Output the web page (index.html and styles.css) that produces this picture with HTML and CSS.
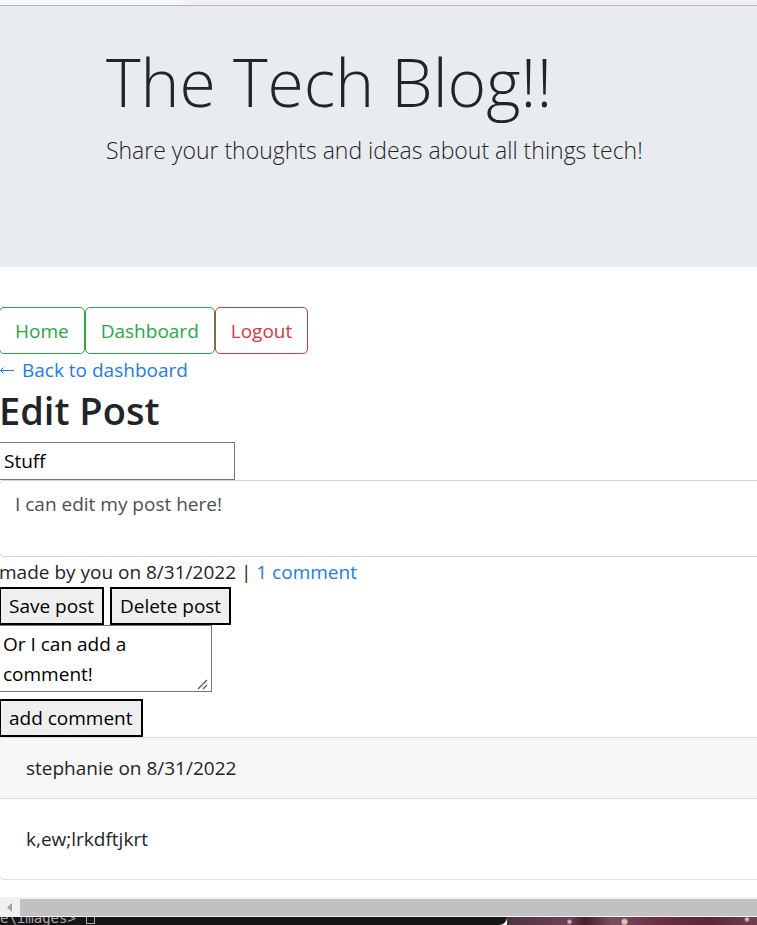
FILE: index.html
```html
<!DOCTYPE html>
<html lang="en">
<head>
<meta charset="utf-8">
<title>The Tech Blog!!</title>
<link rel="stylesheet" href="styles.css">
</head>
<body>
<div class="window">
  <div class="chrome-edge"></div>
  <div class="page">
    <header class="jumbotron">
      <h1 class="display">The Tech Blog!!</h1>
      <p class="lead">Share your thoughts and ideas about all things tech!</p>
    </header>
    <main class="content">
      <nav class="nav">
        <a class="btn btn-success" href="#home">Home</a>
        <a class="btn btn-success" href="#dashboard">Dashboard</a>
        <a class="btn btn-danger" href="#logout">Logout</a>
      </nav>
      <a class="link back" href="#dashboard"><svg class="arrow" viewBox="0 0 16 12" aria-hidden="true"><path d="M15 6.500H1.500M4.500 3.500L1.500 6.500L4.500 9.500"/></svg>Back to dashboard</a>
      <h2 class="title">Edit Post</h2>
      <form class="form">
        <input class="post-title" type="text" value="Stuff" aria-label="Post title">
        <textarea class="post-body" aria-label="Post text">I can edit my post here!</textarea>
        <div class="meta">made by you on 8/31/2022 | <a class="link" href="#comments">1 comment</a></div>
        <div class="actions">
          <button class="plain" type="button">Save post</button>
          <button class="plain" type="button">Delete post</button>
        </div>
      </form>
      <form class="form">
        <div class="comment-box">
          <textarea class="comment-body" aria-label="Comment">Or I can add a comment!</textarea>
          <svg class="grip" viewBox="0 0 12 12" aria-hidden="true"><path d="M1 11L10 2M6 11L10 7"/></svg>
        </div>
        <button class="plain" type="button">add comment</button>
      </form>
      <article class="card" id="comments">
        <div class="card-header">stephanie on 8/31/2022</div>
        <div class="card-body">k,ew;lrkdftjkrt</div>
      </article>
    </main>
  </div>
  <div class="scrollbar">
    <button class="scroll-arrow" type="button" aria-label="Scroll left"><svg viewBox="0 0 20 17"><path d="M12 4v9L7 8.500z"/></svg></button>
    <div class="thumb"></div>
  </div>
  <div class="desktop">
    <div class="terminal"><span class="prompt">e\images&gt; <span class="cursor"></span></span></div>
    <div class="wallpaper"></div>
  </div>
</div>
</body>
</html>
```
FILE: styles.css
```css
* { box-sizing: border-box; }
html, body { height: 100%; }
body {
  margin: 0;
  background: #fff;
  color: #212529;
  font-family: "Segoe UI", "Open Sans", "Noto Sans", sans-serif;
  font-size: 19px;
  line-height: 30px;
}
.window {
  display: flex;
  flex-direction: column;
  min-height: 100%;
  overflow: hidden;
}
.chrome-edge {
  height: 6px;
  background: linear-gradient(90deg, #f8f8f8 180px, #f1efef 190px);
  border-bottom: 1px solid #b4b8ba;
}
.page { flex: 1; }
.jumbotron {
  padding: 33px 14% 100px;
  background: #e9ecef;
  white-space: nowrap;
}
.display {
  margin: 0 0 10px;
  font-size: 66px;
  font-weight: 300;
  line-height: 84px;
}
.lead {
  margin: 0;
  font-size: 23px;
  font-weight: 300;
  line-height: 34px;
}
.content { margin: 40px -8px 17px -1px; }
.nav { display: flex; }
.btn {
  padding: 8px 15px 7px;
  border: 1px solid;
  border-radius: 5px;
  text-decoration: none;
}
.btn-success { color: #28a745; }
.btn-danger { color: #dc3545; }
.link { color: #1a7cf0; text-decoration: none; }
.back { display: flex; align-items: center; gap: 7px; margin-top: 1px; }
.arrow {
  width: 16px;
  height: 12px;
  fill: none;
  stroke: currentColor;
  stroke-width: 1;
}
.title {
  margin: 0 0 7px;
  font-size: 38px;
  font-weight: 600;
  line-height: 50px;
}
.form { display: flex; flex-direction: column; align-items: flex-start; }
input, textarea, button { font: inherit; margin: 0; }
input, textarea { display: block; border: 1px solid #767676; border-radius: 0; background: #fff; }
.post-title { width: 236px; height: 38px; padding: 1px 4px; color: #000; }
.post-body {
  width: 100%;
  height: 77px;
  padding: 8px 15px;
  border-color: #ced4da;
  border-radius: 5px;
  color: #495057;
  resize: none;
}
.actions { display: flex; gap: 6px; }
.plain {
  height: 38px;
  padding: 1px 8px;
  border: 2px solid #000;
  border-radius: 0;
  background: #efefef;
  color: #000;
}
.comment-box { position: relative; margin-bottom: 7px; }
.comment-body {
  width: 213px;
  height: 67px;
  padding: 3px;
  color: #000;
  overflow: hidden;
}
.comment-body::-webkit-resizer { background: #fff; }
.grip {
  position: absolute;
  right: 3px;
  bottom: 2px;
  width: 12px;
  height: 12px;
  fill: none;
  stroke: #555;
  stroke-width: 1.2;
  pointer-events: none;
}
.card { border: 1px solid #dfdfdf; border-radius: 5px; overflow: hidden; }
.card-header {
  padding: 15px 26px;
  border-bottom: 1px solid #dfdfdf;
  background: #f7f7f7;
}
.card-body { padding: 25px 26px; }
.scrollbar {
  display: flex;
  height: 20px;
  padding: 2px 0 1px;
  background: #f1f1f1;
}
.scroll-arrow { width: 20px; padding: 0; border: 0; background: #f1f1f1; }
.scroll-arrow svg { display: block; width: 20px; height: 17px; fill: #a3a3a3; }
.thumb { flex: 1; background: #c1c1c1; }
.desktop { display: flex; height: 8px; overflow: hidden; }
.terminal {
  display: flex;
  align-items: flex-end;
  width: 67%;
  height: 8px;
  border-radius: 0 0 8px;
  background: #161616;
  color: #aaa;
  font-family: "DejaVu Sans Mono", monospace;
  font-size: 14px;
  line-height: 14px;
}
.prompt { display: flex; align-items: flex-end; gap: 10px; white-space: nowrap; }
.cursor { width: 9px; height: 12px; margin-bottom: 1px; border: 1px solid #aaa; }
.wallpaper {
  flex: 1;
  background:
    radial-gradient(circle at 25% 60%, #d9b6c3 1px, transparent 3px),
    radial-gradient(circle at 47% 60%, #dcc9ae 2px, transparent 4px),
    radial-gradient(circle at 96% 30%, #e0bcc8 1px, transparent 3px),
    linear-gradient(90deg, #4e3443, #6a4356 25%, #43202e 31%, #75505f 42%, #6b2e45 60%, #5b2539 80%, #713e52);
}
```
